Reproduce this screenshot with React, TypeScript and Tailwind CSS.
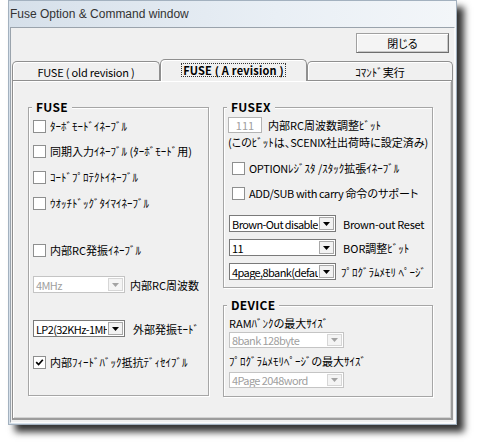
import React from "react";

function Check({ checked }: { checked?: boolean }) {
  return (
    <span className="w-[13px] h-[13px] shrink-0 border border-[#8e8f8f] bg-white flex items-center justify-center">
      {checked ? (
        <svg width="9" height="9" viewBox="0 0 9 9">
          <path d="M1.2 4.2 L3.6 6.6 L7.8 1.8" stroke="#000" strokeWidth="1.7" fill="none" />
        </svg>
      ) : null}
    </span>
  );
}

function Arrow({ disabled }: { disabled?: boolean }) {
  return (
    <svg width="7" height="4" viewBox="0 0 7 4">
      <polygon points="0,0 7,0 3.5,4" fill={disabled ? "#a3a3a3" : "#000"} />
    </svg>
  );
}

function Combo({ text, disabled, className }: { text: string; disabled?: boolean; className: string }) {
  return (
    <div
      className={
        "flex shrink-0 items-stretch bg-white border " +
        (disabled ? "border-[#c4c4c4] text-[#a0a0a0] " : "border-[#7a7a7a] text-black ") +
        className
      }
    >
      <div className="flex-1 min-w-0 overflow-hidden whitespace-nowrap pl-[2px] flex items-center tracking-[-0.6px]">
        {text}
      </div>
      <div
        className={
          "w-[15px] m-[1px] shrink-0 flex items-center justify-center border " +
          (disabled ? "border-[#d6d6d6] bg-[#f4f4f4]" : "border-[#a8a8a8] bg-[#f2f2f2]")
        }
      >
        <Arrow disabled={disabled} />
      </div>
    </div>
  );
}

function Row({ checked, children, className }: { checked?: boolean; children: React.ReactNode; className: string }) {
  return (
    <div className={"h-[16px] flex items-center gap-[4px] whitespace-nowrap " + className}>
      <Check checked={checked} />
      <span>{children}</span>
    </div>
  );
}

function Group({ title, className, children }: { title: string; className: string; children: React.ReactNode }) {
  return (
    <div
      className={
        "relative shrink-0 border border-[#a6a6a6] shadow-[inset_1px_1px_0_#ffffff,1px_1px_0_#ffffff] flex flex-col " +
        className
      }
    >
      <div className="absolute left-[3px] -top-[8px] px-[4px] bg-[#f0f0f0] font-bold text-[12px] leading-[14px] tracking-[0.3px]">
        {title}
      </div>
      {children}
    </div>
  );
}

export default function App() {
  return (
    <div className="w-[480px] h-[448px] bg-white overflow-hidden font-['Noto_Sans_CJK_JP',sans-serif] [font-feature-settings:'palt'] text-[11px] leading-[14px] text-black">
      <div className="ml-[8px] w-[449px] h-[425px] flex flex-col border border-[#a3b1bf] bg-[linear-gradient(to_right,#d6e0ea,#e9eff5_60%,#f3f6f9)] shadow-[7px_7px_7px_rgba(0,0,0,0.8)]">
        <div className="h-[26px] shrink-0 flex items-center pl-[1px] font-['Liberation_Sans',sans-serif] text-[12px] text-[#333]">
          Fuse Option &amp; Command window
        </div>
        <div className="flex-1 mx-[1px] mb-[1px] bg-[#f0f0f0] border border-[#9aa3ac] border-r-[#fbfbfb] border-b-[#fbfbfb] flex flex-col">
          <div className="flex justify-end pr-[5px] pt-[5px]">
            <button className="w-[93px] h-[20px] flex items-center justify-center bg-[#f4f4f4] border border-[#a0a0a0] border-r-[#6e6e6e] border-b-[#6e6e6e] shadow-[inset_1px_1px_0_#ffffff,inset_-1px_-1px_0_#c8c8c8] text-black">
              閉じる
            </button>
          </div>
          <div className="mt-[6px] mx-[1px] h-[21px] flex items-end">
            <div className="w-[148px] h-[19px] border border-b-0 border-[#8f8f8f] rounded-t-[5px] bg-[#f0f0f0] shadow-[inset_1px_1px_0_#ffffff] flex items-center justify-center pt-[1px] whitespace-nowrap tracking-[-0.2px]">
              FUSE ( old revision )
            </div>
            <div className="relative z-10 -mb-px w-[147px] h-[22px] border border-b-0 border-[#8f8f8f] rounded-t-[5px] bg-[#f0f0f0] shadow-[inset_1px_1px_0_#ffffff] flex items-center justify-center pb-[1px] whitespace-nowrap">
              <span className="font-bold border border-dotted border-[#333] px-[1px] leading-[12px] tracking-[0.2px]">
                FUSE ( A revision )
              </span>
            </div>
            <div className="w-[146px] h-[19px] border border-b-0 border-[#8f8f8f] rounded-t-[5px] bg-[#f0f0f0] shadow-[inset_1px_1px_0_#ffffff] flex items-center justify-center pt-[1px] whitespace-nowrap">
              ｺﾏﾝﾄﾞ実行
            </div>
          </div>
          <div className="relative mx-[1px] h-[340px] shrink-0 bg-[#f0f0f0] border border-[#8f8f8f] border-r-2 border-b-2 border-r-[#9c9c9c] border-b-[#9c9c9c] shadow-[inset_1px_1px_0_#ffffff,inset_-1px_-1px_0_#d2d2d2] flex items-start pl-[15px] pt-[26px]">
            <Group title="FUSE" className="w-[181px] h-[289px] pl-[4px]">
              <Row className="mt-[10px]">ﾀｰﾎﾞﾓｰﾄﾞｲﾈｰﾌﾞﾙ</Row>
              <Row className="mt-[9px]">同期入力ｲﾈｰﾌﾞﾙ (ﾀｰﾎﾞﾓｰﾄﾞ用)</Row>
              <Row className="mt-[10px]">ｺｰﾄﾞﾌﾟﾛﾃｸﾄｲﾈｰﾌﾞﾙ</Row>
              <Row className="mt-[10px]">ｳｵｯﾁﾄﾞｯｸﾞﾀｲﾏｲﾈｰﾌﾞﾙ</Row>
              <Row className="mt-[31px]">内部RC発振ｲﾈｰﾌﾞﾙ</Row>
              <div className="mt-[18px] flex items-center whitespace-nowrap">
                <Combo disabled text="4MHz" className="w-[92px] h-[17px]" />
                <span className="ml-[5px]">内部RC周波数</span>
              </div>
              <div className="mt-[27px] flex items-center whitespace-nowrap">
                <Combo text="LP2(32KHz-1MHz)" className="w-[92px] h-[17px]" />
                <span className="ml-[8px]">外部発振ﾓｰﾄﾞ</span>
              </div>
              <Row className="mt-[17px]" checked>
                内部ﾌｨｰﾄﾞﾊﾞｯｸ抵抗ﾃﾞｨｾｲﾌﾞﾙ
              </Row>
            </Group>
            <div className="ml-[14px] flex flex-col">
              <Group title="FUSEX" className="w-[210px] h-[181px]">
                <div className="mt-[9px] ml-[4px] flex items-center whitespace-nowrap">
                  <div className="w-[34px] h-[16px] border border-[#b4b4b4] bg-white text-[#a0a0a0] flex items-center justify-center">
                    111
                  </div>
                  <span className="ml-[6px]">内部RC周波数調整ﾋﾞｯﾄ</span>
                </div>
                <div className="mt-[2px] ml-[4px] h-[14px] whitespace-nowrap">
                  (このﾋﾞｯﾄは、<span className="tracking-[-0.3px]">SCENIX</span>社出荷時に設定済み)
                </div>
                <Row className="mt-[11px] ml-[8px]">
                  <span className="tracking-[-0.3px]">OPTION</span>ﾚｼﾞｽﾀ /ｽﾀｯｸ拡張ｲﾈｰﾌﾞﾙ
                </Row>
                <Row className="mt-[9px] ml-[8px]">
                  <span className="tracking-[-0.4px]">ADD/SUB with carry </span>命令のサポート
                </Row>
                <div className="mt-[14px] ml-[5px] flex items-center whitespace-nowrap">
                  <Combo text="Brown-Out disable" className="w-[107px] h-[17px]" />
                  <span className="ml-[7px] tracking-[-0.3px]">Brown-out Reset</span>
                </div>
                <div className="mt-[7px] ml-[5px] flex items-center whitespace-nowrap">
                  <Combo text="11" className="w-[107px] h-[17px]" />
                  <span className="ml-[7px]">BOR調整ﾋﾞｯﾄ</span>
                </div>
                <div className="mt-[7px] ml-[5px] flex items-center whitespace-nowrap">
                  <Combo text="4page,8bank(default)" className="w-[107px] h-[17px]" />
                  <span className="ml-[5px]">ﾌﾟﾛｸﾞﾗﾑﾒﾓﾘ ﾍﾟｰｼﾞ</span>
                </div>
              </Group>
              <Group title="DEVICE" className="mt-[17px] w-[210px] h-[92px] pl-[5px]">
                <div className="mt-[10px] h-[14px] whitespace-nowrap">RAMﾊﾞﾝｸの最大ｻｲｽﾞ</div>
                <Combo disabled text="8bank 128byte" className="mt-[2px] w-[115px] h-[16px]" />
                <div className="mt-[6px] h-[14px] whitespace-nowrap">ﾌﾟﾛｸﾞﾗﾑﾒﾓﾘﾍﾟｰｼﾞの最大ｻｲｽﾞ</div>
                <Combo disabled text="4Page 2048word" className="mt-[4px] w-[115px] h-[16px]" />
              </Group>
            </div>
          </div>
        </div>
      </div>
    </div>
  );
}
